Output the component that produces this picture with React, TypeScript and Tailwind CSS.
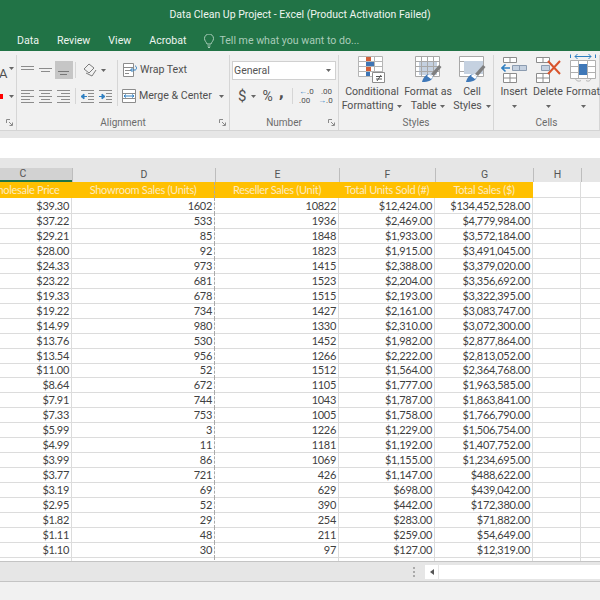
const rows = [
  ["$39.30", "1602", "10822", "$12,424.00", "$134,452,528.00"],
  ["$37.22", "533", "1936", "$2,469.00", "$4,779,984.00"],
  ["$29.21", "85", "1848", "$1,933.00", "$3,572,184.00"],
  ["$28.00", "92", "1823", "$1,915.00", "$3,491,045.00"],
  ["$24.33", "973", "1415", "$2,388.00", "$3,379,020.00"],
  ["$23.22", "681", "1523", "$2,204.00", "$3,356,692.00"],
  ["$19.33", "678", "1515", "$2,193.00", "$3,322,395.00"],
  ["$19.22", "734", "1427", "$2,161.00", "$3,083,747.00"],
  ["$14.99", "980", "1330", "$2,310.00", "$3,072,300.00"],
  ["$13.76", "530", "1452", "$1,982.00", "$2,877,864.00"],
  ["$13.54", "956", "1266", "$2,222.00", "$2,813,052.00"],
  ["$11.00", "52", "1512", "$1,564.00", "$2,364,768.00"],
  ["$8.64", "672", "1105", "$1,777.00", "$1,963,585.00"],
  ["$7.91", "744", "1043", "$1,787.00", "$1,863,841.00"],
  ["$7.33", "753", "1005", "$1,758.00", "$1,766,790.00"],
  ["$5.99", "3", "1226", "$1,229.00", "$1,506,754.00"],
  ["$4.99", "11", "1181", "$1,192.00", "$1,407,752.00"],
  ["$3.99", "86", "1069", "$1,155.00", "$1,234,695.00"],
  ["$3.77", "721", "426", "$1,147.00", "$488,622.00"],
  ["$3.19", "69", "629", "$698.00", "$439,042.00"],
  ["$2.95", "52", "390", "$442.00", "$172,380.00"],
  ["$1.82", "29", "254", "$283.00", "$71,882.00"],
  ["$1.11", "48", "211", "$259.00", "$54,649.00"],
  ["$1.10", "30", "97", "$127.00", "$12,319.00"],
];

const Caret = () => (
  <svg width="5" height="3" viewBox="0 0 5 3" className="shrink-0">
    <path d="M0 0h5L2.500 3z" fill="#666" />
  </svg>
);

const Launcher = () => (
  <svg width="7" height="7" viewBox="0 0 7 7" className="absolute right-[3px] bottom-[4px]">
    <path d="M.5 4V.5H4M3 3l3 3M6.500 3.500v3h-3" fill="none" stroke="#8a8a8a" />
  </svg>
);

// horizontal text lines, used by all the alignment buttons
const Lines = ({ ys, xs, color = "#8c8c8c" }: { ys: number[]; xs: [number, number][]; color?: string }) => (
  <svg width="14" height="14" viewBox="0 0 14 14" className="shrink-0">
    {ys.map((y, i) => (
      <path key={i} d={`M${xs[i % xs.length][0]} ${y + 0.5}H${xs[i % xs.length][1]}`} stroke={color} />
    ))}
  </svg>
);

const Indent = ({ flip }: { flip?: boolean }) => (
  <svg width="14" height="14" viewBox="0 0 14 14" className="shrink-0">
    <path d="M0 1.500h13M7 4.500h6M7 7.500h6M7 10.500h6M0 13.500h13" stroke="#8c8c8c" />
    <path d={flip ? "M0 7.500h4M3 5l3 2.500L3 10z" : "M6 7.500H2M3 5L0 7.500 3 10z"} stroke="#2f7fc1" fill="#2f7fc1" />
  </svg>
);

const ConditionalIcon = () => (
  <svg width="28" height="27" viewBox="0 0 28 27">
    <path d="M.5.5h24v20H.5zM8.500.5v20M16.500.5v20M.5 5.500h24M.5 10.500h24M.5 15.500h24" fill="#fff" stroke="#b5b5b5" />
    <path d="M8 1h5v4H8zM8 11h5v4H8z" fill="#d2603a" />
    <path d="M8 6h8v4H8zM8 16h4v4H8z" fill="#3f75b5" />
    <path d="M14.500 16.500h12v10h-12z" fill="#fff" stroke="#8c8c8c" />
    <path d="M18 20.500h6M18 23h6M19 25l4-6" stroke="#555" fill="none" />
  </svg>
);

const BrushIcon = ({ header }: { header?: boolean }) => (
  <svg width="27" height="27" viewBox="0 0 27 27">
    <path d="M.5.5h24v20H.5z" fill="#fff" stroke="#a8a8a8" />
    {header ? (
      <>
        <path d="M4 6h18v13H4z" fill="#c5d1e0" />
        <path d="M.5 5.500h24M.5 10.500h24M.5 15.500h24M6.500.5v20M12.500.5v20M18.500.5v20" stroke="#a8a8a8" fill="none" />
      </>
    ) : (
      <>
        <path d="M.5 5.500h24M.5 15.500h24" stroke="#a8a8a8" />
        <path d="M5 5h19v13H5z" fill="#c5d1e0" />
      </>
    )}
    <path d="M16 18l8-9 2.500 2-7.500 9z" fill="#7f7f7f" />
    <path d="M7 26c1-4 3-7 7-8l4 3c-1 3-4 5-11 5z" fill="#3f78b8" />
    <path d="M14 18l4 3-2 2-4-3z" fill="#fff" />
  </svg>
);

const InsertIcon = () => (
  <svg width="27" height="26" viewBox="0 0 27 26">
    <path d="M2.500.5h13v5h-13zM9 .5v5M2.500 16.500h13v9h-13zM9 16.500v9M2.500 21h13" fill="#fff" stroke="#8c8c8c" />
    <path d="M11.500 8.500h14v5h-14zM18.500 8.500v5" fill="#c5d1e0" stroke="#8c9cb0" />
    <path d="M9 11H1M4.500 7.500L1 11l3.500 3.500" fill="none" stroke="#2f7fc1" strokeWidth="1.600" />
  </svg>
);

const DeleteIcon = () => (
  <svg width="27" height="26" viewBox="0 0 27 26">
    <path d="M1.500.5h13v5h-13zM8 .5v5M1.500 16.500h13v9h-13zM8 16.500v9M1.500 21h13" fill="#fff" stroke="#8c8c8c" />
    <path d="M6.500 8.500h8v5h-8z" fill="#c5d1e0" stroke="#8c9cb0" />
    <path d="M13 4l12 13M25 4L13 17" stroke="#d9542c" strokeWidth="2" />
  </svg>
);

const FormatIcon = () => (
  <svg width="26" height="29" viewBox="0 0 26 29">
    <path d="M5 2.500h16M7.500 0L5 2.500 7.500 5M18.500 0L21 2.500 18.500 5" fill="none" stroke="#2f7fc1" />
    <path d="M.5 .5V4M25.500 .5V4" stroke="#2f7fc1" />
    <path d="M.5 6.500h25v18H.500zM8.500 6.500v18M17.500 6.500v18M.5 12.500h25M.5 18.500h25" fill="#fff" stroke="#b0b0b0" />
    <path d="M9 10h8v11H9z" fill="#3f78b8" />
    <path d="M5 24.500c2 3 4 3 6 2M21 24.500c-1 3-3 3-5 2" fill="none" stroke="#b0b0b0" />
  </svg>
);

const BigButton = ({ w, icon, one, two }: { w: string; icon: React.ReactNode; one: string; two?: string }) => (
  <div className={`flex shrink-0 flex-col items-center ${w}`}>
    <div className="flex h-[28px] items-end">{icon}</div>
    <div className="mt-[2px] h-[14px] leading-[14px] whitespace-nowrap">{one}</div>
    <div className="flex h-[14px] items-center gap-[4px] leading-[14px] whitespace-nowrap">
      {two}
      <Caret />
    </div>
  </div>
);

const Group = ({ w, label, launcher, children }: { w: string; label?: string; launcher?: boolean; children: React.ReactNode }) => (
  <div className={`relative flex h-full shrink-0 flex-col border-r border-[#d6d6d6] ${w}`}>
    <div className="min-h-0 flex-1">{children}</div>
    <div className="h-[14px] pb-[1px] text-center text-[10px] leading-[13px] text-[#6b6b6b]">{label}</div>
    {launcher && <Launcher />}
  </div>
);

const Ribbon = () => (
  <div className="flex h-[79px] overflow-hidden bg-[#f1f1f1] pt-[4px] text-[10.600px] text-[#505050]">
    <Group w="w-[17px]" launcher>
      <div className="flex flex-col pt-[7px]">
        <div className="flex h-[20px] items-start">
          <span className="-ml-[1px] text-[13px] leading-[24px]">A</span>
          <span className="mt-[5px] ml-[2px]"><Caret /></span>
        </div>
        <div className="mt-[9px] flex h-[10px] items-center">
          <div className="h-[5px] w-[3px] bg-[#ff0000]" />
          <span className="ml-[6px]"><Caret /></span>
        </div>
      </div>
    </Group>

    <Group w="w-[213px]" label="Alignment" launcher>
      <div className="flex flex-col gap-[6px] pt-[5px] pl-[2px]">
        <div className="flex h-[20px] items-center">
          <div className="flex w-[18px] justify-center"><Lines ys={[3, 6]} xs={[[0, 13]]} /></div>
          <div className="flex w-[18px] justify-center"><Lines ys={[5, 8]} xs={[[0, 13], [2, 11]]} /></div>
          <div className="flex h-[18px] w-[18px] items-center justify-center bg-[#c6c6c6]"><Lines ys={[8, 11]} xs={[[1, 12], [3, 10]]} color="#777" /></div>
          <div className="mx-[2px] h-[16px] w-px bg-[#d6d6d6]" />
          <svg width="16" height="14" viewBox="0 0 16 14" className="ml-[5px]">
            <path d="M1 6l5-5 5 4-5 5zM3 10l6 3 4-6" fill="none" stroke="#7c7c7c" />
          </svg>
          <span className="ml-[2px]"><Caret /></span>
          <div className="ml-[11px] h-[46px] w-px self-start bg-[#d6d6d6]" />
          <svg width="15" height="14" viewBox="0 0 15 14" className="ml-[5px]">
            <path d="M.5.5h10v13H.5zM.5 4.500h10M2 7.500h6M2 10.500h4" fill="#fff" stroke="#8c8c8c" />
            <path d="M8 7h4c2 0 2-4 0-4M9.500 5L7.500 7l2 2" fill="none" stroke="#2f7fc1" />
          </svg>
          <span className="ml-[2px] whitespace-nowrap">Wrap Text</span>
        </div>
        <div className="flex h-[20px] items-center">
          <div className="flex w-[18px] justify-center"><Lines ys={[1, 4, 7, 10, 13]} xs={[[0, 13], [0, 9]]} /></div>
          <div className="flex w-[18px] justify-center"><Lines ys={[1, 4, 7, 10, 13]} xs={[[0, 13], [2, 11]]} /></div>
          <div className="flex w-[18px] justify-center"><Lines ys={[1, 4, 7, 10, 13]} xs={[[0, 13], [4, 13]]} /></div>
          <div className="mx-[2px] h-[16px] w-px bg-[#d6d6d6]" />
          <div className="ml-[3px] flex gap-[4px]">
            <Indent />
            <Indent flip />
          </div>
          <svg width="15" height="14" viewBox="0 0 15 14" className="ml-[9px]">
            <path d="M.5.5h13v13H.5zM.5 4.500h13M.5 9.500h13" fill="#fff" stroke="#8c8c8c" />
            <path d="M2 7h10M4 5.500L2 7l2 1.500M10 5.500L12 7l-2 1.500" fill="none" stroke="#2f7fc1" />
          </svg>
          <span className="ml-[2px] whitespace-nowrap">Merge &amp; Center</span>
          <span className="ml-[7px]"><Caret /></span>
        </div>
      </div>
    </Group>

    <Group w="w-[109px]" label="Number" launcher>
      <div className="flex flex-col gap-[5px] px-[2px] pt-[6px]">
        <div className="flex h-[19px] w-[104px] items-center justify-between border border-[#d0d0d0] bg-white pr-[4px] pl-[1px] text-[10.500px] text-[#555]">
          General
          <Caret />
        </div>
        <div className="flex h-[22px] items-center">
          <span className="ml-[6px] text-[15px]">$</span>
          <span className="ml-[5px]"><Caret /></span>
          <span className="ml-[6px] text-[14px]">%</span>
          <span className="-mt-[7px] ml-[6px] font-['DejaVu_Sans'] text-[14px] leading-[14px] font-bold">,</span>
          <div className="ml-[8px] h-[16px] w-px bg-[#d6d6d6]" />
          <div className="ml-[6px] flex w-[14px] flex-col text-[8px] leading-[9px]">
            <span className="whitespace-nowrap"><span className="text-[#2f7fc1]">←</span>.0</span>
            <span>.00</span>
          </div>
          <div className="ml-[5px] flex w-[14px] flex-col text-right text-[8px] leading-[9px]">
            <span>.00</span>
            <span className="whitespace-nowrap"><span className="text-[#2f7fc1]">→</span>.0</span>
          </div>
        </div>
      </div>
    </Group>

    <Group w="w-[155px]" label="Styles">
      <div className="flex">
        <BigButton w="w-[66px]" icon={<ConditionalIcon />} one="Conditional" two="Formatting" />
        <BigButton w="w-[46px]" icon={<BrushIcon header />} one="Format as" two="Table" />
        <BigButton w="w-[42px]" icon={<BrushIcon />} one="Cell" two="Styles" />
      </div>
    </Group>

    <Group w="w-[106px]" label="Cells">
      <div className="flex">
        <BigButton w="w-[40px]" icon={<InsertIcon />} one="Insert" />
        <BigButton w="w-[28px]" icon={<DeleteIcon />} one="Delete" />
        <BigButton w="w-[42px]" icon={<FormatIcon />} one="Format" />
      </div>
    </Group>
  </div>
);

const gridCols = "grid grid-cols-[98px_143px_124px_96px_98px_48px_48px]";

const Sheet = () => (
  <div className="h-[393px] overflow-hidden bg-white font-['Lato',sans-serif] text-[11px] tracking-[-0.3px] text-[#3f3f3f]">
    <div className="-ml-[26px] w-[655px]">
      <div className={`${gridCols} h-[14px] bg-[#e6e6e6] text-center font-['Roboto',sans-serif] text-[10.500px] leading-[14px] tracking-normal text-[#555]`}>
        <div className="border-b-2 border-[#217346] bg-[#d2d2d2] leading-[12px]">C</div>
        {["D", "E", "F", "G", "H", ""].map((h, i) => (
          <div key={i} className="border-l border-[#bdbdbd]">{h}</div>
        ))}
      </div>
      <div className={`${gridCols} h-[16px] leading-[16px]`}>
        <div className="bg-[#ffc000] text-center whitespace-nowrap text-[#fdebc0]">Wholesale Price</div>
        <div className="border-r border-dashed border-[#aaa] bg-[#ffc000] text-center whitespace-nowrap text-[#fdebc0]">Showroom Sales (Units)</div>
        <div className="bg-[#ffc000] text-center whitespace-nowrap text-[#fdebc0]">Reseller Sales (Unit)</div>
        <div className="bg-[#ffc000] text-center whitespace-nowrap text-[#fdebc0]">Total Units Sold (#)</div>
        <div className="bg-[#ffc000] text-center whitespace-nowrap text-[#fdebc0]">Total Sales ($)</div>
        <div className="border-r border-b border-[#dcdcdc]" />
        <div className="border-b border-[#dcdcdc]" />
      </div>
      {[...rows, ["", "", "", "", ""]].map((r, i) => (
        <div key={i} className={`${gridCols} h-[14.960px] leading-[15px]`}>
          {r.map((c, j) => (
            <div
              key={j}
              className={`border-r border-b border-[#dcdcdc] pr-[2px] text-right whitespace-nowrap ${j === 1 ? "border-r-[#aaa] [border-right-style:dashed]" : ""}`}
            >
              {c}
            </div>
          ))}
          <div className="border-r border-b border-[#dcdcdc]" />
          <div className="border-b border-[#dcdcdc]" />
        </div>
      ))}
    </div>
  </div>
);

export default function App() {
  return (
    <div className="h-[600px] w-[600px] overflow-hidden bg-[#f1f1f1] font-['Roboto',sans-serif]">
      <div className="h-[51px] bg-[#217346] text-[#eef5f0]">
        <div className="h-[31px] pt-[6px] text-center text-[10.500px] leading-[18px]">
          Data Clean Up Project - Excel (Product Activation Failed)
        </div>
        <div className="flex h-[20px] items-center pl-[17px] text-[10.600px]">
          <span>Data</span>
          <span className="ml-[18px]">Review</span>
          <span className="ml-[18px]">View</span>
          <span className="ml-[18px]">Acrobat</span>
          <svg width="10" height="14" viewBox="0 0 10 14" className="ml-[18px]">
            <path d="M3 10C2.500 8 .5 7 .5 4.500a4.500 4.500 0 019 0C9.500 7 7.500 8 7 10zM3.500 12h3M4 13.500h2" fill="none" stroke="#a9ccb9" />
          </svg>
          <span className="ml-[5px] text-[#a9ccb9]">Tell me what you want to do...</span>
        </div>
      </div>
      <Ribbon />
      <div className="h-[8px] border-t border-[#d4d4d4] bg-[#e6e6e6]" />
      <div className="h-[20px] bg-white" />
      <div className="h-[10px] bg-[#e6e6e6]" />
      <Sheet />
      <div className="flex h-[21px] items-center border-y border-[#c4c4c4] bg-[#e6e6e6]">
        <div className="ml-[413px] h-[10px] w-[2px] border-l-2 border-dotted border-[#aaa]" />
        <div className="ml-[10px] flex h-[14px] w-[13px] items-center justify-center bg-white">
          <svg width="4" height="6" viewBox="0 0 4 6"><path d="M4 0v6L0 3z" fill="#555" /></svg>
        </div>
        <div className="ml-[1px] h-[14px] flex-1 bg-white" />
      </div>
    </div>
  );
}
